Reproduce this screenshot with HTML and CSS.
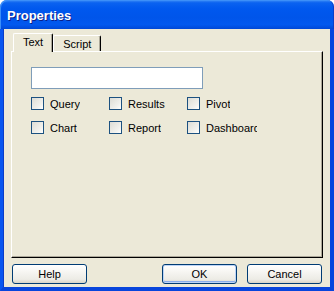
FILE: index.html
```html
<!DOCTYPE html>
<html>
<head>
<meta charset="utf-8">
<link rel="stylesheet" href="styles.css">
</head>
<body>
<div class="window">
  <div class="titlebar"><span class="title">Properties</span></div>
  <div class="client">
    <div class="tabs">
      <div class="tab tab-active">Text</div>
      <div class="tab">Script</div>
    </div>
    <div class="panel">
      <div class="field"></div>
      <div class="checks">
        <label class="check"><span class="box"></span><span class="lbl">Query</span></label>
        <label class="check"><span class="box"></span><span class="lbl">Results</span></label>
        <label class="check"><span class="box"></span><span class="lbl">Pivot</span></label>
        <label class="check"><span class="box"></span><span class="lbl">Chart</span></label>
        <label class="check"><span class="box"></span><span class="lbl">Report</span></label>
        <label class="check"><span class="box"></span><span class="lbl">Dashboard</span></label>
      </div>
    </div>
    <div class="buttons">
      <div class="btn">Help</div>
      <div class="btn btn-default">OK</div>
      <div class="btn">Cancel</div>
    </div>
  </div>
</div>
</body>
</html>
```

FILE: styles.css
```css
html, body {
  margin: 0;
  padding: 0;
  background: #ffffff;
}

.window {
  width: 334px;
  height: 291px;
  display: flex;
  flex-direction: column;
  font-family: "Liberation Sans", Arial, sans-serif;
  font-size: 11px;
  color: #000;
}

.titlebar {
  height: 29px;
  box-sizing: border-box;
  padding: 8px 0 0 7px;
  border-radius: 7px 7px 0 0;
  background: linear-gradient(to bottom, #3b8cf6 0%, #0a62f0 10%, #0058ee 30%, #0055ea 60%, #0259ef 85%, #0048d6 100%);
  box-shadow: inset 1px 1px 0 #3c8ff8, inset -1px 0 0 #0a3fc8;
}

.title {
  display: block;
  font-family: "Liberation Sans", Arial, sans-serif;
  font-weight: bold;
  font-size: 13px;
  line-height: 16px;
  color: #ffffff;
  text-shadow: 1px 1px 0 #0a1f8a;
}

.client {
  flex: 1;
  display: flex;
  flex-direction: column;
  background: #ece9d8;
  border-left: 3px solid #0856f0;
  border-right: 4px solid #0846de;
  border-bottom: 4px solid #0845dc;
  padding: 4px 7px 3px 8px;
  box-shadow: inset 1px 0 0 #0a3dc8;
}

.tabs {
  height: 18px;
  display: flex;
  align-items: flex-end;
  padding-left: 2px;
  position: relative;
  z-index: 1;
}

.tab {
  height: 16px;
  box-sizing: border-box;
  padding: 2px 9px 0 9px;
  line-height: 13px;
  border-left: 1px solid #ffffff;
  border-top: 1px solid #ffffff;
  border-right: 1px solid #000000;
  border-radius: 2px 2px 0 0;
  box-shadow: inset -1px 0 0 #aca899;
  background: #ece9d8;
}

.tab-active {
  height: 19px;
  margin-bottom: -1px;
  padding-top: 2px;
}

.panel {
  height: 207px;
  width: 312px;
  box-sizing: border-box;
  border-left: 1px solid #ffffff;
  border-top: 1px solid #ffffff;
  border-right: 1px solid #000000;
  border-bottom: 1px solid #000000;
  box-shadow: inset -1px -1px 0 #aca899;
  padding: 15px 19px 0 19px;
}

.field {
  width: 172px;
  height: 22px;
  box-sizing: border-box;
  border: 1px solid #7f9db9;
  background: #ffffff;
}

.checks {
  margin-top: 8px;
  display: grid;
  grid-template-columns: 78px 78px 78px;
  row-gap: 11px;
}

.check {
  display: flex;
  align-items: center;
  height: 13px;
}

.box {
  width: 13px;
  height: 13px;
  box-sizing: border-box;
  border: 1px solid #1c5180;
  background: linear-gradient(135deg, #dcdcd5 0%, #f2f2ee 70%, #ffffff 100%);
  flex: none;
}

.lbl {
  margin-left: 6px;
  max-width: 51px;
  overflow: hidden;
  white-space: nowrap;
  line-height: 13px;
  margin-top: 1px;
}

.buttons {
  margin-top: 6px;
  height: 20px;
  display: flex;
  gap: 10px;
  padding: 0 1px 0 1px;
}

.btn {
  width: 75px;
  height: 20px;
  box-sizing: border-box;
  border: 1px solid #003c74;
  border-radius: 3px;
  background: linear-gradient(to bottom, #ffffff 0%, #f6f5f1 40%, #ecebe5 80%, #d8d4c8 100%);
  text-align: center;
  line-height: 18px;
}

.btn-default {
  margin-left: auto;
  box-shadow: inset 0 0 0 1px #bcd4f6, inset 0 -1px 0 1px #89adeb;
}
```
